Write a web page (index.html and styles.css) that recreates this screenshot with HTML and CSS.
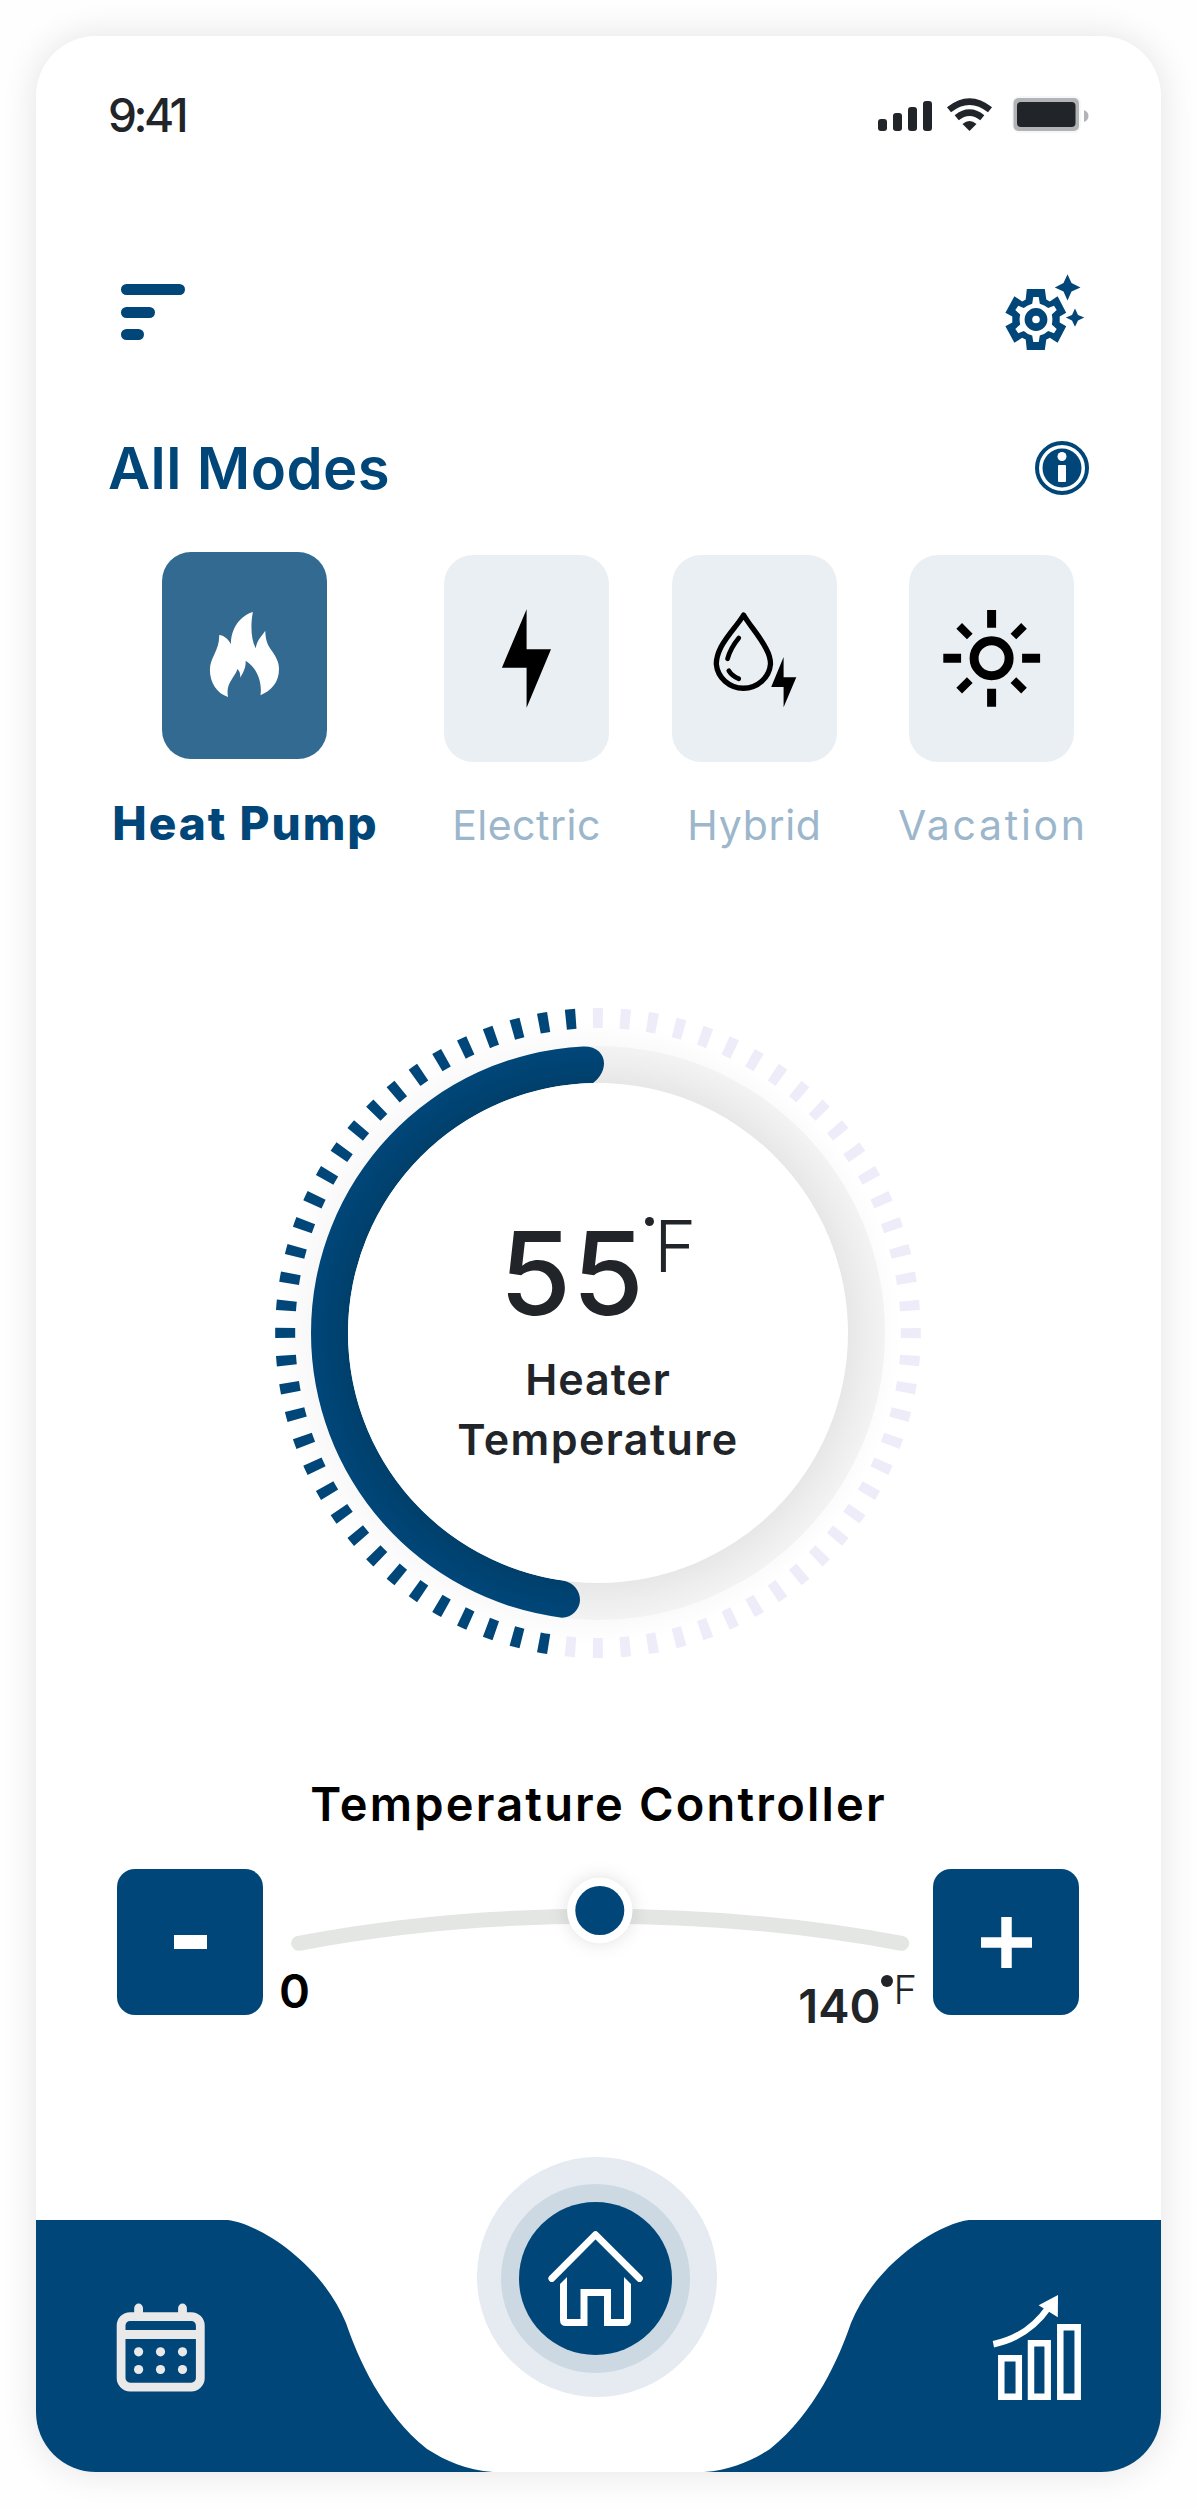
FILE: index.html
```html
<!DOCTYPE html>
<html lang="en">
<head>
<meta charset="utf-8">
<title>Water Heater</title>
<link rel="stylesheet" href="styles.css">
</head>
<body>
<main class="phone">
  <header class="status">
    <span class="time">9:41</span>
    <svg class="status-icons" viewBox="879 95 211 42" width="211" height="42">
      <g fill="#212529">
        <rect x="879" y="120" width="9" height="12" rx="3"/>
        <rect x="894" y="114" width="9" height="18" rx="3"/>
        <rect x="909" y="108" width="9" height="24" rx="3"/>
        <rect x="924" y="102" width="9" height="30" rx="3"/>
        <path d="M970.5 132L963.5 125Q970.5 119 977.5 125Z"/>
      </g>
      <path d="M957.7 118.8Q970.5 108.6 983.3 118.8M950 110.8Q970.5 94.400 991 110.800" fill="none" stroke="#212529" stroke-width="6.500"/>
      <rect x="1013" y="97" width="69" height="37" rx="7" fill="#f6f7f9"/>
      <rect x="1014.500" y="99" width="65.500" height="33" rx="5" fill="#b1b3b5"/>
      <rect x="1018" y="103" width="58.500" height="25" rx="4" fill="#212529"/>
      <path d="M1085 111Q1089.500 113 1089.500 117T1085 123Z" fill="#b1b3b5"/>
    </svg>
  </header>

  <div class="toolbar">
    <div class="menu"><i class="bar bar-long"></i><i class="bar bar-mid"></i><i class="bar bar-short"></i></div>
    <svg class="gear" viewBox="-31 -45.500 80 76.500" width="80" height="76.500" fill="#004678">
      <path fill-rule="evenodd" d="M-9.200-30.500H8.800L10.300-20Q12-19 13.800-18L21.600-23.200 30.200-6.800 23.700-3V3L30.200 6.800 21.600 23.200 13.800 18.300Q12 19.500 10.300 20L8.800 30.500H-9.200L-10.300 20Q-12 19.500-13.800 18.300L-21.600 23.200-30.600 6.800-23.700 3V-3L-30.600-6.800-21.600-23.200-13.800-18Q-12-19-10.300-20ZM-2.700-22.500L-3.800-15.800Q-8.500-14.500-12.200-11.500L-17.700-13.800-20.700-9.500-15.800-5Q-17 0-15.800 5L-20.700 9.500-17.700 13.800-12.200 11.500Q-8.500 15-3.800 16L-2.700 22.500H2.700L3.800 16Q8.500 15 12.200 11.500L18 13.800 20.700 9.500 15.800 5Q17 0 15.800-5L20.700-9.500 18-13.800 12.200-11.500Q8.500-14.500 3.800-15.800L2.700-22.500Z"/>
      <circle r="7.600" fill="none" stroke="#004678" stroke-width="7.600"/>
      <path d="M31.500-45.300L35.500-36.500 44.500-32 35.500-28 31.500-19 27.500-28 18.800-32 27.500-36.500Z"/>
      <path d="M39-11L42-4.500 48.300-2 42 1 39 7.300 36 1 29.800-2 36-4.500Z"/>
    </svg>
  </div>

  <div class="title-row">
    <h1>All Modes</h1>
    <svg viewBox="-27 -27 54 54" width="54" height="54">
      <circle r="25" fill="#fff" stroke="#004678" stroke-width="4"/>
      <circle r="19.500" fill="#004678"/>
      <circle cy="-11.500" r="4.500" fill="#fff"/>
      <rect x="-4" y="-3" width="8" height="17" rx="1" fill="#fff"/>
    </svg>
  </div>

  <section class="modes">
    <div class="mode mode-active">
      <div class="tile"><svg viewBox="0 0 165 207" width="165" height="207" fill="#fff"><path d="M90.900 60C88.500 72 88.800 87 93.700 96.300C95 88 99 85 103.300 78.700C103.500 90 106.500 94 110 99C114 105 117 110 117 117C117 131 109 138.500 98.500 143.300C100.500 129 94 115 83.700 108.700C84 116 81 121 78.200 125.700C78.500 121.500 77.500 119 75.400 117C73.500 125 63 131 66.100 145C55 141.500 48 131 47.900 118C47.900 105 57.500 99 57.200 83C62 83.500 66 86.500 68.900 92.300C69 76 78 64 90.900 60Z"/></svg></div>
      <span class="label">Heat Pump</span>
    </div>
    <div class="mode">
      <div class="tile"><svg viewBox="0 0 165 207" width="165" height="207"><path d="M82.600 54.300V94.300H107L82.600 152.700V112.700H57.900Z"/></svg></div>
      <span class="label label-electric">Electric</span>
    </div>
    <div class="mode">
      <div class="tile"><svg viewBox="0 0 165 207" width="165" height="207">
        <g fill="none" stroke="#000" stroke-width="5.300" stroke-linecap="round" stroke-linejoin="round">
          <path d="M71.600 60C78 71 87 80 94 93.500C97 99 98.500 104 98.500 109A27.200 26.500 0 0 1 44.300 109C44.300 104 46 98 49 92C56 79 65 71 71.600 60Z"/>
          <path d="M66.800 83Q58.500 93 55.500 103.800M56.800 115.700Q60 121 66.800 123.700" stroke-width="4.700"/>
        </g>
        <path d="M111.600 102V122.300H124.300L111.600 152.300V132H99.200Z"/></svg></div>
      <span class="label label-hybrid">Hybrid</span>
    </div>
    <div class="mode">
      <div class="tile"><svg viewBox="-82.600 -103.300 165 207" width="165" height="207" fill="none" stroke="#000" stroke-width="9">
        <circle r="17.500"/>
        <path d="M0-48.300V-30.500M0 30.500V48.500M-48.300 0H-30.500M30.500 0H48.500"/>
        <path stroke-width="8" d="M-32.400-32.400L-21.800-21.800M32.400-32.400L21.800-21.800M-32.400 32.400L-21.800 21.800M32.400 32.400L21.800 21.800"/></svg></div>
      <span class="label label-vacation">Vacation</span>
    </div>
  </section>

  <section class="gauge">
    <svg class="dial" viewBox="-330 -335 660 670" width="660" height="670">
      <defs>
        <radialGradient id="track" gradientUnits="userSpaceOnUse" cx="0" cy="0" r="287">
          <stop offset=".87" stop-color="#e7e7e7"/><stop offset=".94" stop-color="#eeeeee"/><stop offset="1" stop-color="#f3f3f3"/>
        </radialGradient>
        <radialGradient id="heat" gradientUnits="userSpaceOnUse" cx="0" cy="0" r="287">
          <stop offset=".87" stop-color="#003f6b"/><stop offset=".95" stop-color="#004474"/><stop offset="1" stop-color="#004678"/>
        </radialGradient>
        <radialGradient id="halo" gradientUnits="userSpaceOnUse" cx="-10" cy="0" r="312">
          <stop offset=".89" stop-color="#f8f8f8"/><stop offset="1" stop-color="#f8f8f8" stop-opacity="0"/>
        </radialGradient>
      </defs>
      <circle cx="-10" r="312" fill="url(#halo)"/>
      <g fill="none" stroke-width="20" stroke-dasharray="1.820 3.180" stroke-dashoffset="-1.590" transform="scale(1 1.007)">
        <path pathLength="190" stroke="#eeecf9" transform="rotate(-2.500)" d="M0-312.800A312.800 312.800 0 1 1-54.320 308.050"/>
        <path pathLength="170" stroke="#004678" transform="rotate(187.500)" d="M0-312.800A312.800 312.800 0 0 1 54.320 308.050"/>
      </g>
      <circle r="287" fill="url(#track)"/>
      <path fill="url(#heat)" d="M-15-286.600C-1-287 6-279 6-269.500C6-262 1-254 -5-250A250 250 0 0 0-250 0A250 250 0 0 0-34.700 247.600C-24 250 -18 258 -18 267C-18 276 -26 284.700 -36 284.700A287 287 0 0 1-287 0A287 287 0 0 1-15-286.600Z"/>
      <circle r="250" fill="#fff"/>
    </svg>
    <div class="readout">
      <div class="reading"><span class="value">55</span><i class="degree"></i><span class="unit">F</span></div>
      <span class="caption heater">Heater</span>
      <span class="caption temperature">Temperature</span>
    </div>
  </section>

  <section class="controller">
    <h2>Temperature Controller</h2>
    <div class="controls">
      <div class="step"><svg viewBox="0 0 146 146" width="146" height="146"><path fill="#fff" d="M57 66H90V80H57Z"/></svg></div>
      <div class="slider">
        <svg viewBox="263 1869 670 97.500" width="670" height="97.500">
          <path d="M299.700 1943.300C395 1925 500 1916.200 600 1916.200S805 1925 902.700 1943.300" transform="translate(-1 0)" fill="none" stroke="#e4e6e4" stroke-width="15" stroke-linecap="round"/>
          <circle class="knob" cx="599.800" cy="1910.500" r="32.700" fill="#fff"/>
          <circle cx="599.800" cy="1910.500" r="24.500" fill="#004678"/>
        </svg>
        <div class="range">
          <span class="min">0</span>
          <span class="max">140<i class="degree-small"></i><span class="unit-small">F</span></span>
        </div>
      </div>
      <div class="step"><svg viewBox="0 0 146 146" width="146" height="146"><path stroke="#fff" stroke-width="10.500" d="M48 73.500H99M73.500 48V99"/></svg></div>
    </div>
  </section>

  <nav class="tabs">
    <svg class="tabs-shape" viewBox="0 0 1125 252" width="1125" height="252" fill="#004678">
      <path id="wave" d="M0 0H192C224 4 286 44 310 103C322 138 346 193 391 229C410 241 430 250 457 252H0Z"/>
      <use href="#wave" transform="matrix(-1 0 0 1 1125 0)"/>
    </svg>
    <svg class="tab-calendar" viewBox="116 2303 90 90" width="90" height="90" fill="#e9e9ea">
      <g fill="none" stroke="#e9e9ea" stroke-width="8.800">
        <rect x="121.100" y="2316.600" width="79.200" height="70.500" rx="9"/>
        <path d="M121 2334.500H200"/>
        <path d="M138.600 2308V2316M182.500 2308V2316" stroke-linecap="round"/>
      </g>
      <circle cx="138.600" cy="2351.800" r="4.600"/><circle cx="160.500" cy="2351.800" r="4.600"/><circle cx="182.500" cy="2351.800" r="4.600"/>
      <circle cx="138.600" cy="2369.500" r="4.600"/><circle cx="160.500" cy="2369.500" r="4.600"/><circle cx="182.500" cy="2369.500" r="4.600"/>
    </svg>
    <svg class="tab-home" viewBox="477 2157 240 240" width="240" height="240">
      <circle cx="597" cy="2277" r="120" fill="#e6ebf2"/>
      <circle cx="595.500" cy="2278.500" r="94.500" fill="#ccd9e2"/>
      <circle cx="595.500" cy="2278.500" r="76.500" fill="#004678"/>
      <path fill="none" stroke="#fff" stroke-width="6.800" stroke-linecap="round" stroke-linejoin="round" d="M551.800 2278.500L595.500 2234.700 639.500 2278.500"/>
      <path fill="#fff" d="M560 2284L567 2277V2319H580.500V2289H611V2319H624V2277L631 2284V2320Q631 2326 625 2326H604V2296H587.500V2326H566Q560 2326 560 2320Z"/>
    </svg>
    <svg class="tab-stats" viewBox="992 2294 90 107" width="90" height="107" fill="none" stroke="#fff" stroke-width="6.500">
      <path d="M1001.300 2358.300H1018.800V2396.700H1001.300ZM1031 2343.300H1047.700V2396.700H1031ZM1060.300 2327.300H1077.700V2396.700H1060.300Z"/>
      <path d="M993.400 2344.200Q1028 2337 1048.500 2307.500"/>
      <path fill="#fff" stroke="none" d="M1058 2295L1038.600 2305.300 1057.800 2317.300Z"/>
    </svg>
  </nav>
</main>
</body>
</html>
```

FILE: styles.css
```css
* { box-sizing: border-box; }

body {
  margin: 0;
  padding: 36px;
  background: #fefefe;
  color: #212529;
  font-family: Inter, "Liberation Sans", sans-serif;
}

svg { display: block; flex: none; }
h1, h2 { margin: 0; }

.phone {
  display: flex;
  flex-direction: column;
  width: 1125px;
  height: 2436px;
  border-radius: 60px;
  background: #fff;
  box-shadow: 0 0 36px rgba(0, 0, 0, 0.11);
  overflow: hidden;
}

.status, .toolbar, .title-row {
  display: flex;
  align-items: center;
  justify-content: space-between;
  padding: 0 72px;
}

.status { height: 158px; }
.time { font-size: 46px; font-weight: 500; letter-spacing: -3.5px; }

.toolbar { height: 236px; padding: 0 76px 0 85px; }
.menu { display: flex; flex-direction: column; gap: 11.5px; }
.bar { height: 11px; border-radius: 6px; background: #004678; }
.bar-long { width: 63.5px; }
.bar-mid { width: 33.5px; }
.bar-short { width: 22.5px; }

.title-row { height: 76px; }
.title-row h1 { font-size: 58px; font-weight: 600; color: #004678; letter-spacing: 0.4px; }

.modes {
  display: grid;
  grid-template-columns: 273px 165px 165px 183px;
  column-gap: 63px;
  height: 303px;
  margin-top: 46px;
  padding-left: 72px;
}
.mode { display: flex; flex-direction: column; align-items: center; padding-top: 3px; }
.mode-active { padding-top: 0; }
.tile { width: 165px; height: 207px; border-radius: 29px; background: #eaeff4; }
.mode-active .tile { background: #336a92; }
.label {
  margin-top: 33px;
  font-size: 41px;
  line-height: 60px;
  white-space: nowrap;
  color: #9cb6cb;
}
.label-electric { letter-spacing: 0.5px; }
.label-hybrid { letter-spacing: 0.7px; }
.label-vacation { margin-right: -2.7px; letter-spacing: 2.7px; }
.mode-active .label {
  margin: 34px -2px 0 0;
  font-size: 46px;
  font-weight: 800;
  letter-spacing: 2px;
  color: #004678;
}

.gauge { display: grid; justify-content: center; margin: 143px 0 0 -1px; }
.dial, .readout { grid-area: 1 / 1; }
.readout { display: flex; flex-direction: column; align-items: center; padding-top: 215px; }
.reading { display: flex; align-items: flex-start; height: 120px; margin-bottom: 16px; }
.value { font-size: 116px; font-weight: 450; line-height: 120px; letter-spacing: 1px; }
.degree { width: 9px; height: 9px; margin: 4px 0 0 0; border-radius: 50%; background: #212529; }
.unit { font-size: 72px; font-weight: 350; line-height: 65px; }
.caption { font-size: 43px; font-weight: 600; line-height: 60px; }
.heater { letter-spacing: 0.9px; }
.temperature { letter-spacing: 1.4px; }

.controller { margin-top: 106px; }
.controller h2 { text-align: center; font-size: 47px; font-weight: 600; line-height: 60px; letter-spacing: 2.2px; color: #000; }
.controls { display: flex; align-items: flex-start; margin-top: 35px; padding-left: 81px; }
.step { width: 146px; height: 146px; border-radius: 18px; background: #004678; }
.slider { width: 670px; }
.slider svg { overflow: visible; }
.knob { filter: drop-shadow(0 0 9px rgba(0, 0, 0, 0.12)); }
.range { display: flex; justify-content: space-between; align-items: flex-start; padding: 0 16px; font-size: 47px; font-weight: 600; line-height: 48px; }
.min { color: #000; }
.max { display: flex; padding-top: 15px; }
.degree-small { width: 12px; height: 12px; margin: -7px 0 0 1px; border-radius: 50%; background: #212529; }
.unit-small { margin-top: -15px; font-size: 40px; font-weight: 350; line-height: 46px; }

.tabs {
  display: grid;
  grid-template: 315px / 441px 240px 444px;
  margin-top: auto;
}
.tabs-shape { grid-area: 1 / 1 / 2 / 4; align-self: end; }
.tab-calendar { grid-area: 1 / 1; margin: 146px 0 0 80px; }
.tab-home { grid-area: 1 / 2; }
.tab-stats { grid-area: 1 / 3; justify-self: end; margin: 137px 79px 0 0; }
```
